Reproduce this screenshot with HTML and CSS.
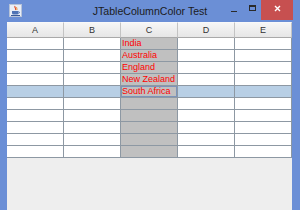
FILE: index.html
```html
<!DOCTYPE html>
<html lang="en">
<head>
    <meta charset="UTF-8">
    <title>JTableColumnColor Test</title>
    <link rel="stylesheet" href="styles.css">
</head>
<body>
    <div class="window">
        <div class="titlebar">
            <div class="tb-left">
                <svg class="app-icon" width="13" height="13" viewBox="0 0 13 13">
                    <rect x="0.5" y="0.5" width="12" height="12" fill="#e9eef7" stroke="#b7c3d8"/>
                    <path d="M6 2 C5 3.5 7.5 4 6.5 6" stroke="#e0502a" stroke-width="1.2" fill="none"/>
                    <path d="M7.8 3 C7 4 8.6 4.6 7.8 6" stroke="#f08a2a" stroke-width="1" fill="none"/>
                    <path d="M3 7 H9.5 V9 Q9.5 10.5 8 10.5 H4.5 Q3 10.5 3 9 Z" fill="#4f73b5"/>
                    <path d="M9.5 7.6 Q11 7.8 10.4 9 Q10 9.6 9.3 9.5" stroke="#4f73b5" stroke-width="0.8" fill="none"/>
                    <rect x="2" y="11" width="9" height="1" fill="#3a5a99"/>
                </svg>
            </div>
            <div class="title">JTableColumnColor Test</div>
            <div class="tb-right">
                <span class="btn btn-min"><i></i></span>
                <span class="btn btn-max"><i></i></span>
                <span class="btn btn-close">
                    <svg width="7" height="7" viewBox="0 0 7 7"><path d="M1 1 L6 6 M6 1 L1 6" stroke="#fff" stroke-width="1.4"/></svg>
                </span>
            </div>
        </div>
        <div class="frame">
            <div class="content">
                <div class="table">
                    <div class="row head">
                        <div class="th">A</div>
                        <div class="th">B</div>
                        <div class="th">C</div>
                        <div class="th">D</div>
                        <div class="th">E</div>
                    </div>
                    <div class="row"><div class="td"></div><div class="td"></div><div class="td col-c">India</div><div class="td"></div><div class="td"></div></div>
                    <div class="row"><div class="td"></div><div class="td"></div><div class="td col-c">Australia</div><div class="td"></div><div class="td"></div></div>
                    <div class="row"><div class="td"></div><div class="td"></div><div class="td col-c">England</div><div class="td"></div><div class="td"></div></div>
                    <div class="row"><div class="td"></div><div class="td"></div><div class="td col-c">New Zealand</div><div class="td"></div><div class="td"></div></div>
                    <div class="row sel"><div class="td"></div><div class="td"></div><div class="td col-c focus">South Africa</div><div class="td"></div><div class="td"></div></div>
                    <div class="row"><div class="td"></div><div class="td"></div><div class="td col-c"></div><div class="td"></div><div class="td"></div></div>
                    <div class="row"><div class="td"></div><div class="td"></div><div class="td col-c"></div><div class="td"></div><div class="td"></div></div>
                    <div class="row"><div class="td"></div><div class="td"></div><div class="td col-c"></div><div class="td"></div><div class="td"></div></div>
                    <div class="row"><div class="td"></div><div class="td"></div><div class="td col-c"></div><div class="td"></div><div class="td"></div></div>
                    <div class="row"><div class="td"></div><div class="td"></div><div class="td col-c"></div><div class="td"></div><div class="td"></div></div>
                </div>
            </div>
        </div>
    </div>
</body>
</html>
```

FILE: styles.css
```css
html, body {
  margin: 0;
  padding: 0;
}
body {
  width: 300px;
  height: 210px;
  overflow: hidden;
  background: #6b8fd6;
  font-family: "Liberation Sans", Arial, sans-serif;
}
.window {
  width: 300px;
  height: 210px;
  display: flex;
  flex-direction: column;
  background: #6b8fd6;
}
.titlebar {
  height: 22px;
  display: grid;
  grid-template-columns: 1fr auto 1fr;
  align-items: start;
}
.tb-left {
  padding: 4px 0 0 9px;
}
.app-icon {
  display: block;
}
.title {
  font-size: 10.6px;
  line-height: 22px;
  color: #1c1c1c;
  white-space: nowrap;
}
.tb-right {
  justify-self: end;
  display: flex;
  padding-right: 7px;
}
.btn {
  height: 20px;
  display: flex;
  align-items: center;
  justify-content: center;
}
.btn-min {
  width: 18px;
}
.btn-min i {
  display: block;
  width: 6px;
  height: 1px;
  margin-top: 3px;
  background: #2a2a2a;
}
.btn-max {
  width: 18px;
}
.btn-max i {
  display: block;
  width: 5px;
  height: 3px;
  margin-top: -4px;
  border: 1px solid #2a2a2a;
  border-top-width: 2px;
}
.btn-close {
  width: 32px;
  background: #c75050;
}
.btn-close svg {
  display: block;
  margin-top: -3px;
}
.frame {
  flex: 1;
  padding: 0 8px 0 7px;
  display: flex;
}
.content {
  flex: 1;
  background: #eeeeee;
}
.row {
  display: grid;
  grid-template-columns: repeat(5, 57px);
}
.th {
  box-sizing: border-box;
  height: 16px;
  background: linear-gradient(#f6f6f6, #e6e6e6);
  border-top: 1px solid #f9f9f9;
  border-right: 1px solid #c3c3c3;
  border-bottom: 1px solid #a9a9a9;
  font-size: 9px;
  line-height: 14px;
  text-align: center;
  color: #333;
}
.td {
  box-sizing: border-box;
  height: 12px;
  background: #fff;
  border-right: 1px solid #8d98a3;
  border-bottom: 1px solid #8d98a3;
  padding-left: 1px;
  font-size: 9px;
  line-height: 11px;
  white-space: nowrap;
  overflow: hidden;
}
.row.sel .td {
  background: #b8cfe5;
}
.td.col-c,
.row.sel .td.col-c {
  background: #c0c0c0;
  color: #ff0000;
}
.td.focus {
  box-shadow: inset 0 0 0 1px #7c94ba;
}
```
